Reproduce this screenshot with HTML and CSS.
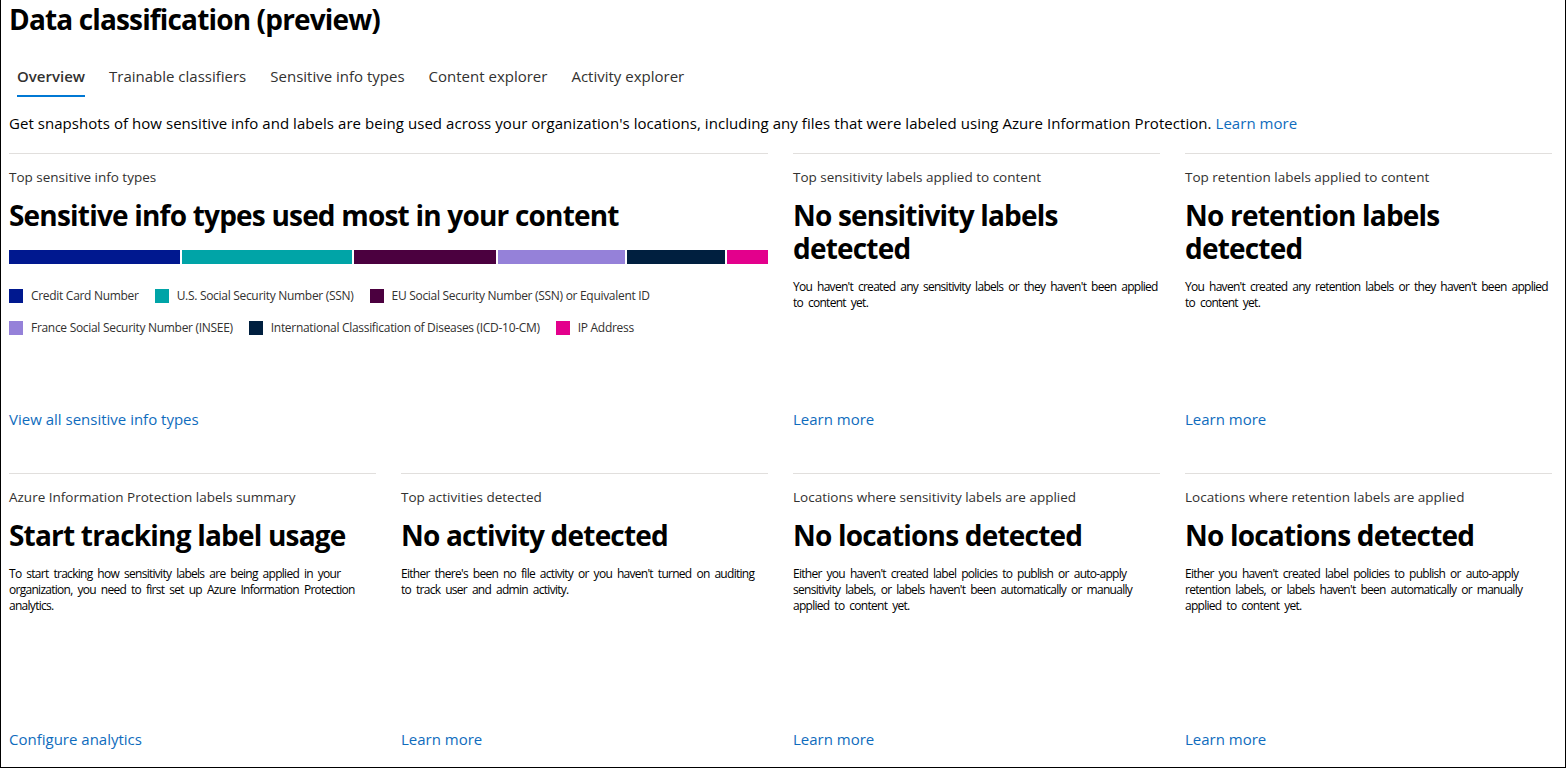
FILE: index.html
```html
<!DOCTYPE html>
<html lang="en">
<head>
<meta charset="utf-8">
<title>Data classification (preview)</title>
<link rel="stylesheet" href="styles.css">
</head>
<body>
<div class="page">
  <h1 class="page-title">Data classification (preview)</h1>
  <nav class="tabs">
    <a class="tab active">Overview</a>
    <a class="tab">Trainable classifiers</a>
    <a class="tab">Sensitive info types</a>
    <a class="tab">Content explorer</a>
    <a class="tab">Activity explorer</a>
  </nav>
  <p class="intro">Get snapshots of how sensitive info and labels are being used across your organization's locations, including any files that were labeled using Azure Information Protection. <a class="link">Learn more</a></p>

  <div class="grid">
    <section class="card wide">
      <div class="card-label">Top sensitive info types</div>
      <h2 class="card-title">Sensitive info types used most in your content</h2>
      <div class="bar">
        <span class="seg c1" style="flex-grow:171"></span>
        <span class="seg c2" style="flex-grow:170"></span>
        <span class="seg c3" style="flex-grow:141"></span>
        <span class="seg c4" style="flex-grow:127"></span>
        <span class="seg c5" style="flex-grow:98"></span>
        <span class="seg c6" style="flex-grow:41"></span>
      </div>
      <ul class="legend">
        <li><span class="sw c1"></span>Credit Card Number</li>
        <li><span class="sw c2"></span>U.S. Social Security Number (SSN)</li>
        <li><span class="sw c3"></span>EU Social Security Number (SSN) or Equivalent ID</li>
        <li><span class="sw c4"></span>France Social Security Number (INSEE)</li>
        <li><span class="sw c5"></span>International Classification of Diseases (ICD-10-CM)</li>
        <li><span class="sw c6"></span>IP Address</li>
      </ul>
      <a class="link card-link">View all sensitive info types</a>
    </section>

    <section class="card">
      <div class="card-label">Top sensitivity labels applied to content</div>
      <h2 class="card-title">No sensitivity labels detected</h2>
      <p class="card-body">You haven't created any sensitivity labels or they haven't been applied to content yet.</p>
      <a class="link card-link">Learn more</a>
    </section>

    <section class="card">
      <div class="card-label">Top retention labels applied to content</div>
      <h2 class="card-title">No retention labels detected</h2>
      <p class="card-body">You haven't created any retention labels or they haven't been applied to content yet.</p>
      <a class="link card-link">Learn more</a>
    </section>

    <section class="card">
      <div class="card-label">Azure Information Protection labels summary</div>
      <h2 class="card-title">Start tracking label usage</h2>
      <p class="card-body">To start tracking how sensitivity labels are being applied in your organization, you need to first set up Azure Information Protection analytics.</p>
      <a class="link card-link">Configure analytics</a>
    </section>

    <section class="card">
      <div class="card-label">Top activities detected</div>
      <h2 class="card-title">No activity detected</h2>
      <p class="card-body">Either there's been no file activity or you haven't turned on auditing to track user and admin activity.</p>
      <a class="link card-link">Learn more</a>
    </section>

    <section class="card">
      <div class="card-label">Locations where sensitivity labels are applied</div>
      <h2 class="card-title">No locations detected</h2>
      <p class="card-body">Either you haven't created label policies to publish or auto-apply sensitivity labels, or labels haven't been automatically or manually applied to content yet.</p>
      <a class="link card-link">Learn more</a>
    </section>

    <section class="card">
      <div class="card-label">Locations where retention labels are applied</div>
      <h2 class="card-title">No locations detected</h2>
      <p class="card-body">Either you haven't created label policies to publish or auto-apply retention labels, or labels haven't been automatically or manually applied to content yet.</p>
      <a class="link card-link">Learn more</a>
    </section>
  </div>
</div>
</body>
</html>
```

FILE: styles.css
```css
* { box-sizing: border-box; }
html, body { margin: 0; padding: 0; background: #fff; }
body {
  font-family: "Open Sans", "Noto Sans", "Liberation Sans", sans-serif;
  color: #000;
}
.page {
  width: 1566px;
  height: 768px;
  border: 1px solid #000;
  border-top: none;
  padding: 0 13px 0 8px;
  overflow: hidden;
}
.page-title {
  margin: 0;
  font-size: 28px;
  line-height: 38px;
  font-weight: 700;
  letter-spacing: -0.85px;
  color: #000;
}
.tabs {
  display: flex;
  gap: 24px;
  margin-top: 28px;
  padding-left: 8px;
}
.tab {
  font-size: 15px;
  line-height: 20px;
  color: #323130;
  padding-bottom: 9px;
  border-bottom: 2px solid transparent;
}
.tab.active {
  font-weight: 600;
  border-bottom-color: #0078d4;
}
.intro {
  margin: 16px 0 0;
  font-size: 15px;
  line-height: 20px;
  letter-spacing: 0.05px;
  color: #000;
}
.link { color: #0f6cbd; text-decoration: none; }
.grid {
  display: grid;
  grid-template-columns: repeat(4, 1fr);
  column-gap: 25px;
  margin-top: 20px;
}
.card {
  border-top: 1px solid #e1dfdd;
  min-height: 320px;
  padding: 14px 0 44px;
  display: flex;
  flex-direction: column;
}
.card.wide { grid-column: span 2; }
.card-label {
  font-size: 13.5px;
  line-height: 18px;
  color: #323130;
}
.card-title {
  margin: 13px 0 0;
  font-size: 28px;
  line-height: 33px;
  font-weight: 700;
  letter-spacing: -0.8px;
  color: #000;
}
.card-body {
  margin: 14px 0 0;
  font-size: 12px;
  line-height: 16px;
  letter-spacing: -0.72px;
  word-spacing: 2.5px;
  color: #000;
}
.card-link {
  margin-top: auto;
  font-size: 15px;
  line-height: 20px;
}
.bar {
  display: flex;
  gap: 2px;
  height: 14px;
  margin-top: 18px;
}
.seg { display: block; flex-basis: 0; }
.c1 { background: #00188f; }
.c2 { background: #00a4a7; }
.c3 { background: #4b003f; }
.c4 { background: #9581d9; }
.c5 { background: #001f3f; }
.c6 { background: #e3008c; }
.legend {
  list-style: none;
  margin: 24px 0 0;
  padding: 0;
  display: flex;
  flex-wrap: wrap;
  column-gap: 16px;
  row-gap: 16px;
}
.legend li {
  display: flex;
  align-items: center;
  gap: 8px;
  font-size: 12px;
  line-height: 16px;
  letter-spacing: -0.3px;
  color: #323130;
}
.sw { width: 14px; height: 14px; display: block; }
```
